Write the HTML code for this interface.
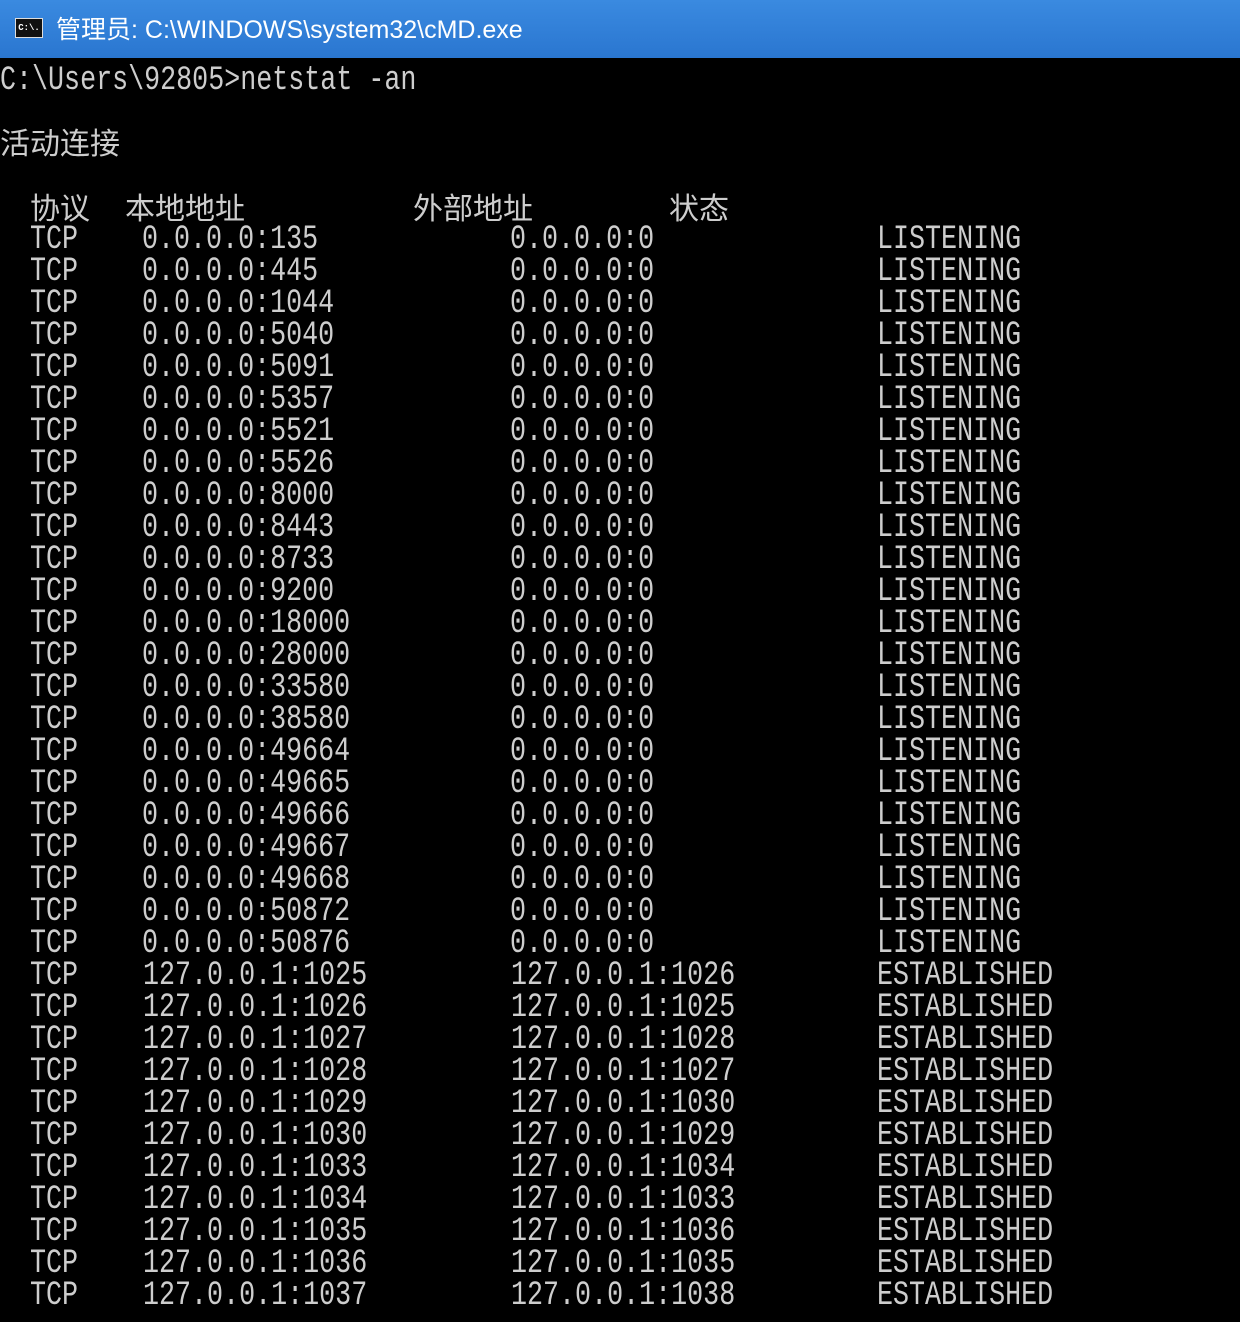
<!DOCTYPE html>
<html><head><meta charset="utf-8"><style>
html,body{margin:0;padding:0;background:#000;width:1240px;height:1322px;overflow:hidden;position:relative}
.tb{position:absolute;left:0;top:0;width:1240px;height:58px;background:linear-gradient(#3a8ae0,#2a76d0);}
.tb .t{position:absolute;left:56px;top:10px;color:#fff;font:25px "Liberation Sans","Noto Sans CJK SC",sans-serif;}
.ic{position:absolute;left:15px;top:18px;width:28px;height:20px;background:#111;border:1px solid #ddd;box-sizing:border-box;color:#fff;font:bold 9px "Liberation Mono",monospace;line-height:18px;text-align:center}
.w{position:absolute;left:0;top:3px;width:1240px;height:1319px}
.r{position:absolute;height:32px;line-height:32px;color:#cdcdcd;font-family:"Liberation Mono","Noto Serif CJK SC",monospace;font-size:26.7px;white-space:pre;transform:scaleY(1.3);transform-origin:50% 50%}
.c{position:absolute;color:#cdcdcd;font-family:"Noto Sans CJK SC",sans-serif;font-size:30px;line-height:32px;white-space:pre}
</style></head><body>
<div class="tb"><div class="ic">C:\.</div><div class="t">管理员: C:\WINDOWS\system32\cMD.exe</div></div>
<div class="w">
<div class="r" style="left:0;top:62px">C:\Users\92805&gt;netstat -an</div>
<div class="c" style="left:0;top:122px">活动连接</div>
<div class="c" style="left:30px;top:187px">协议</div>
<div class="c" style="left:125px;top:187px">本地地址</div>
<div class="c" style="left:413px;top:187px">外部地址</div>
<div class="c" style="left:669px;top:187px">状态</div>
<div class="r" style="left:30px;top:221px">TCP</div><div class="r" style="left:142px;top:221px">0.0.0.0:135</div><div class="r" style="left:510px;top:221px">0.0.0.0:0</div><div class="r" style="left:877px;top:221px">LISTENING</div>
<div class="r" style="left:30px;top:253px">TCP</div><div class="r" style="left:142px;top:253px">0.0.0.0:445</div><div class="r" style="left:510px;top:253px">0.0.0.0:0</div><div class="r" style="left:877px;top:253px">LISTENING</div>
<div class="r" style="left:30px;top:285px">TCP</div><div class="r" style="left:142px;top:285px">0.0.0.0:1044</div><div class="r" style="left:510px;top:285px">0.0.0.0:0</div><div class="r" style="left:877px;top:285px">LISTENING</div>
<div class="r" style="left:30px;top:317px">TCP</div><div class="r" style="left:142px;top:317px">0.0.0.0:5040</div><div class="r" style="left:510px;top:317px">0.0.0.0:0</div><div class="r" style="left:877px;top:317px">LISTENING</div>
<div class="r" style="left:30px;top:349px">TCP</div><div class="r" style="left:142px;top:349px">0.0.0.0:5091</div><div class="r" style="left:510px;top:349px">0.0.0.0:0</div><div class="r" style="left:877px;top:349px">LISTENING</div>
<div class="r" style="left:30px;top:381px">TCP</div><div class="r" style="left:142px;top:381px">0.0.0.0:5357</div><div class="r" style="left:510px;top:381px">0.0.0.0:0</div><div class="r" style="left:877px;top:381px">LISTENING</div>
<div class="r" style="left:30px;top:413px">TCP</div><div class="r" style="left:142px;top:413px">0.0.0.0:5521</div><div class="r" style="left:510px;top:413px">0.0.0.0:0</div><div class="r" style="left:877px;top:413px">LISTENING</div>
<div class="r" style="left:30px;top:445px">TCP</div><div class="r" style="left:142px;top:445px">0.0.0.0:5526</div><div class="r" style="left:510px;top:445px">0.0.0.0:0</div><div class="r" style="left:877px;top:445px">LISTENING</div>
<div class="r" style="left:30px;top:477px">TCP</div><div class="r" style="left:142px;top:477px">0.0.0.0:8000</div><div class="r" style="left:510px;top:477px">0.0.0.0:0</div><div class="r" style="left:877px;top:477px">LISTENING</div>
<div class="r" style="left:30px;top:509px">TCP</div><div class="r" style="left:142px;top:509px">0.0.0.0:8443</div><div class="r" style="left:510px;top:509px">0.0.0.0:0</div><div class="r" style="left:877px;top:509px">LISTENING</div>
<div class="r" style="left:30px;top:541px">TCP</div><div class="r" style="left:142px;top:541px">0.0.0.0:8733</div><div class="r" style="left:510px;top:541px">0.0.0.0:0</div><div class="r" style="left:877px;top:541px">LISTENING</div>
<div class="r" style="left:30px;top:573px">TCP</div><div class="r" style="left:142px;top:573px">0.0.0.0:9200</div><div class="r" style="left:510px;top:573px">0.0.0.0:0</div><div class="r" style="left:877px;top:573px">LISTENING</div>
<div class="r" style="left:30px;top:605px">TCP</div><div class="r" style="left:142px;top:605px">0.0.0.0:18000</div><div class="r" style="left:510px;top:605px">0.0.0.0:0</div><div class="r" style="left:877px;top:605px">LISTENING</div>
<div class="r" style="left:30px;top:637px">TCP</div><div class="r" style="left:142px;top:637px">0.0.0.0:28000</div><div class="r" style="left:510px;top:637px">0.0.0.0:0</div><div class="r" style="left:877px;top:637px">LISTENING</div>
<div class="r" style="left:30px;top:669px">TCP</div><div class="r" style="left:142px;top:669px">0.0.0.0:33580</div><div class="r" style="left:510px;top:669px">0.0.0.0:0</div><div class="r" style="left:877px;top:669px">LISTENING</div>
<div class="r" style="left:30px;top:701px">TCP</div><div class="r" style="left:142px;top:701px">0.0.0.0:38580</div><div class="r" style="left:510px;top:701px">0.0.0.0:0</div><div class="r" style="left:877px;top:701px">LISTENING</div>
<div class="r" style="left:30px;top:733px">TCP</div><div class="r" style="left:142px;top:733px">0.0.0.0:49664</div><div class="r" style="left:510px;top:733px">0.0.0.0:0</div><div class="r" style="left:877px;top:733px">LISTENING</div>
<div class="r" style="left:30px;top:765px">TCP</div><div class="r" style="left:142px;top:765px">0.0.0.0:49665</div><div class="r" style="left:510px;top:765px">0.0.0.0:0</div><div class="r" style="left:877px;top:765px">LISTENING</div>
<div class="r" style="left:30px;top:797px">TCP</div><div class="r" style="left:142px;top:797px">0.0.0.0:49666</div><div class="r" style="left:510px;top:797px">0.0.0.0:0</div><div class="r" style="left:877px;top:797px">LISTENING</div>
<div class="r" style="left:30px;top:829px">TCP</div><div class="r" style="left:142px;top:829px">0.0.0.0:49667</div><div class="r" style="left:510px;top:829px">0.0.0.0:0</div><div class="r" style="left:877px;top:829px">LISTENING</div>
<div class="r" style="left:30px;top:861px">TCP</div><div class="r" style="left:142px;top:861px">0.0.0.0:49668</div><div class="r" style="left:510px;top:861px">0.0.0.0:0</div><div class="r" style="left:877px;top:861px">LISTENING</div>
<div class="r" style="left:30px;top:893px">TCP</div><div class="r" style="left:142px;top:893px">0.0.0.0:50872</div><div class="r" style="left:510px;top:893px">0.0.0.0:0</div><div class="r" style="left:877px;top:893px">LISTENING</div>
<div class="r" style="left:30px;top:925px">TCP</div><div class="r" style="left:142px;top:925px">0.0.0.0:50876</div><div class="r" style="left:510px;top:925px">0.0.0.0:0</div><div class="r" style="left:877px;top:925px">LISTENING</div>
<div class="r" style="left:30px;top:957px">TCP</div><div class="r" style="left:143px;top:957px">127.0.0.1:1025</div><div class="r" style="left:511px;top:957px">127.0.0.1:1026</div><div class="r" style="left:877px;top:957px">ESTABLISHED</div>
<div class="r" style="left:30px;top:989px">TCP</div><div class="r" style="left:143px;top:989px">127.0.0.1:1026</div><div class="r" style="left:511px;top:989px">127.0.0.1:1025</div><div class="r" style="left:877px;top:989px">ESTABLISHED</div>
<div class="r" style="left:30px;top:1021px">TCP</div><div class="r" style="left:143px;top:1021px">127.0.0.1:1027</div><div class="r" style="left:511px;top:1021px">127.0.0.1:1028</div><div class="r" style="left:877px;top:1021px">ESTABLISHED</div>
<div class="r" style="left:30px;top:1053px">TCP</div><div class="r" style="left:143px;top:1053px">127.0.0.1:1028</div><div class="r" style="left:511px;top:1053px">127.0.0.1:1027</div><div class="r" style="left:877px;top:1053px">ESTABLISHED</div>
<div class="r" style="left:30px;top:1085px">TCP</div><div class="r" style="left:143px;top:1085px">127.0.0.1:1029</div><div class="r" style="left:511px;top:1085px">127.0.0.1:1030</div><div class="r" style="left:877px;top:1085px">ESTABLISHED</div>
<div class="r" style="left:30px;top:1117px">TCP</div><div class="r" style="left:143px;top:1117px">127.0.0.1:1030</div><div class="r" style="left:511px;top:1117px">127.0.0.1:1029</div><div class="r" style="left:877px;top:1117px">ESTABLISHED</div>
<div class="r" style="left:30px;top:1149px">TCP</div><div class="r" style="left:143px;top:1149px">127.0.0.1:1033</div><div class="r" style="left:511px;top:1149px">127.0.0.1:1034</div><div class="r" style="left:877px;top:1149px">ESTABLISHED</div>
<div class="r" style="left:30px;top:1181px">TCP</div><div class="r" style="left:143px;top:1181px">127.0.0.1:1034</div><div class="r" style="left:511px;top:1181px">127.0.0.1:1033</div><div class="r" style="left:877px;top:1181px">ESTABLISHED</div>
<div class="r" style="left:30px;top:1213px">TCP</div><div class="r" style="left:143px;top:1213px">127.0.0.1:1035</div><div class="r" style="left:511px;top:1213px">127.0.0.1:1036</div><div class="r" style="left:877px;top:1213px">ESTABLISHED</div>
<div class="r" style="left:30px;top:1245px">TCP</div><div class="r" style="left:143px;top:1245px">127.0.0.1:1036</div><div class="r" style="left:511px;top:1245px">127.0.0.1:1035</div><div class="r" style="left:877px;top:1245px">ESTABLISHED</div>
<div class="r" style="left:30px;top:1277px">TCP</div><div class="r" style="left:143px;top:1277px">127.0.0.1:1037</div><div class="r" style="left:511px;top:1277px">127.0.0.1:1038</div><div class="r" style="left:877px;top:1277px">ESTABLISHED</div>
</div>
</body></html>
